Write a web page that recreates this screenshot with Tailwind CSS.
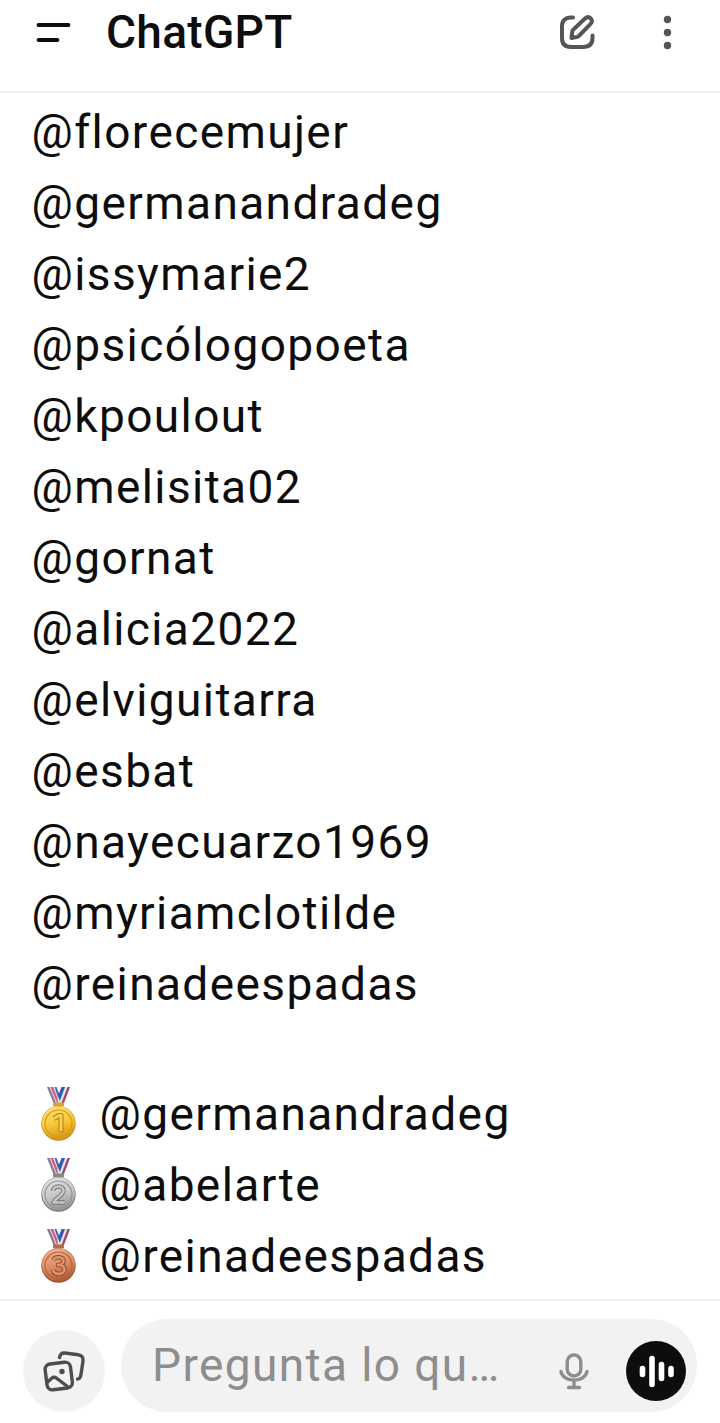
<!DOCTYPE html>
<html lang="es">
<head>
<meta charset="utf-8">
<title>ChatGPT</title>
<script src="https://cdn.jsdelivr.net/npm/@tailwindcss/browser@4"></script>
</head>
<body class="bg-white">
<div class="flex h-[1423px] w-[720px] flex-col overflow-hidden bg-white font-[Roboto,sans-serif] text-[46px] text-[#0d0d0d]">
  <header class="flex h-[93px] shrink-0 items-start border-b-2 border-[#f1f1f1] pl-[36px]">
    <svg class="mt-[20px] h-[26px] w-[36px] shrink-0" viewBox="0 0 36 26" fill="none" stroke="#0d0d0d" stroke-width="3.8" stroke-linecap="round"><path d="M2.500 5H32.500M2.500 20H21.500"/></svg>
    <h1 class="ml-[34px] w-[220px] text-[46px] leading-[64px] font-medium tracking-[0.3px]">ChatGPT</h1>
    <svg class="mt-[12px] ml-[227px] h-[42px] w-[42px] shrink-0" viewBox="0 0 42 42" fill="none" stroke="#555" stroke-width="4" stroke-linecap="round" stroke-linejoin="round"><path d="M20 5.500H18C12 5.500 9 9 9 14V26C9 32 12 35 18 35H30C36 35 39.500 32 39.500 26V23.500"/><path d="M18.500 26L19.300 19.500Q19.500 18.500 20.300 17.700L32 6.500C34 4.700 36.300 5 37.800 6.500C39.200 8 39.200 10.200 37.500 12L26.300 23.500Q25.500 24.500 24.300 24.900Z"/></svg>
    <svg class="mt-[12px] ml-[62px] h-[42px] w-[42px] shrink-0" viewBox="0 0 42 42" fill="#555"><circle cx="10.500" cy="7.500" r="3.700"/><circle cx="10.500" cy="20.500" r="3.700"/><circle cx="10.500" cy="33.500" r="3.700"/></svg>
  </header>

  <main class="flex h-[1206px] shrink-0 flex-col pt-[4px] pl-[31.5px] leading-[71px] tracking-[1.4px] whitespace-nowrap">
    <ul>
      <li>@florecemujer</li>
      <li>@germanandradeg</li>
      <li>@issymarie2</li>
      <li>@psicólogopoeta</li>
      <li>@kpoulout</li>
      <li>@melisita02</li>
      <li>@gornat</li>
      <li>@alicia2022</li>
      <li>@elviguitarra</li>
      <li>@esbat</li>
      <li>@nayecuarzo1969</li>
      <li>@myriamclotilde</li>
      <li>@reinadeespadas</li>
    </ul>
    <svg class="absolute h-0 w-0" aria-hidden="true">
      <defs>
        <linearGradient id="gold" x2="0.3" y2="1"><stop stop-color="#ffe983"/><stop offset=".6" stop-color="#f6c636"/><stop offset="1" stop-color="#dd981a"/></linearGradient>
        <linearGradient id="silver" x2="0.3" y2="1"><stop stop-color="#e6e6e6"/><stop offset=".6" stop-color="#c8c8c8"/><stop offset="1" stop-color="#999"/></linearGradient>
        <linearGradient id="bronze" x2="0.3" y2="1"><stop stop-color="#f3b896"/><stop offset=".6" stop-color="#dc8c64"/><stop offset="1" stop-color="#b4603c"/></linearGradient>
        <g id="ribbon">
          <path d="M6 0H14L22 16H12.500Z" fill="#dfe3f3"/><path d="M6 0H8.500L15 16H12.500Z" fill="#8b7898"/><path d="M9.500 0H12L18.500 16H16Z" fill="#d65d68"/><path d="M13.500 0H15.500L21 14L19 16Z" fill="#4568bc"/>
          <path d="M21 0H29L22 16H17L16.500 12Z" fill="#dfe3f3"/><path d="M20.500 0H24L18.800 14L17 9Z" fill="#3459b4"/><path d="M26.500 0H29L23 16H20.500Z" fill="#a9445f"/>
        </g>
      </defs>
    </svg>
    <ul class="mt-[59px]">
      <li class="flex">
        <svg class="mt-[8px] ml-[9.5px] h-[54px] w-[35px] shrink-0" viewBox="0 0 35 54"><use href="#ribbon"/><rect x="12" y="15.500" width="11" height="4" rx="1" fill="#dba32c"/><circle cx="17.500" cy="36.500" r="17.200" fill="#c48a1c"/><circle cx="17.500" cy="36" r="16.500" fill="url(#gold)"/><circle cx="17.500" cy="36.500" r="13.500" fill="none" stroke="#d89b1b" stroke-width="1.200"/><path d="M13 31.500L18 28.500H20V45" fill="none" stroke="#b57b12" stroke-width="5" stroke-linejoin="round"/><path d="M13 31.500L18 28.500H20V44.300" fill="none" stroke="#f8d254" stroke-width="3" stroke-linejoin="round"/></svg>
        <span class="ml-[23.5px]">@germanandradeg</span>
      </li>
      <li class="flex">
        <svg class="mt-[8px] ml-[9.5px] h-[54px] w-[35px] shrink-0" viewBox="0 0 35 54"><use href="#ribbon"/><rect x="12" y="15.500" width="11" height="4" rx="1" fill="#888"/><circle cx="17.500" cy="36.500" r="17.200" fill="#777"/><circle cx="17.500" cy="36" r="16.500" fill="url(#silver)"/><circle cx="17.500" cy="36.500" r="13.500" fill="none" stroke="#969696" stroke-width="1.200"/><path d="M12 33C12 27 23 27 22.500 33C22 37 15 40 12.500 44.500H23.500" fill="none" stroke="#747474" stroke-width="4.500" stroke-linejoin="round"/><path d="M12 33C12 27 23 27 22.500 33C22 37 15 40 12.500 44.500H23.500" fill="none" stroke="#c4c4c4" stroke-width="2.600" stroke-linejoin="round"/></svg>
        <span class="ml-[23.5px]">@abelarte</span>
      </li>
      <li class="flex">
        <svg class="mt-[8px] ml-[9.5px] h-[54px] w-[35px] shrink-0" viewBox="0 0 35 54"><use href="#ribbon"/><rect x="12" y="15.500" width="11" height="4" rx="1" fill="#b96a45"/><circle cx="17.500" cy="36.500" r="17.200" fill="#95502f"/><circle cx="17.500" cy="36" r="16.500" fill="url(#bronze)"/><circle cx="17.500" cy="36.500" r="13.500" fill="none" stroke="#b9643d" stroke-width="1.200"/><path d="M12.500 31C14 27 23 27.500 22.500 32C22.500 35 19 36 17 36C20 36 23.500 37 23.500 40.500C23.500 46 13.500 46.500 12 41" fill="none" stroke="#8f4b2e" stroke-width="4.500" stroke-linejoin="round"/><path d="M12.500 31C14 27 23 27.500 22.500 32C22.500 35 19 36 17 36C20 36 23.500 37 23.500 40.500C23.500 46 13.500 46.500 12 41" fill="none" stroke="#de946c" stroke-width="2.600" stroke-linejoin="round"/></svg>
        <span class="ml-[23.5px]">@reinadeespadas</span>
      </li>
    </ul>
  </main>

  <footer class="flex h-[124px] shrink-0 items-start border-t-2 border-[#f1f1f1] pl-[23px]">
    <button class="mt-[29px] flex h-[82px] w-[82px] shrink-0 items-center justify-center rounded-full bg-[#f2f2f2]">
      <svg class="h-[82px] w-[82px]" viewBox="0 0 82 82" fill="none" stroke="#4d4d4d" stroke-width="3.400" stroke-linecap="round" stroke-linejoin="round"><rect x="23" y="33" width="25.500" height="26" rx="5.500" transform="rotate(-7 35.700 46)"/><path d="M24.500 52L29 48Q31 46.500 33.300 48L44.500 56.500"/><circle cx="39" cy="41.500" r="2.700" fill="#4d4d4d" stroke="none"/><path d="M36.500 27.500C37.300 24 39 22.500 42 23L55 24.700C59 25.200 60.500 27.500 60 31L58 44.500C57.500 47.500 56.500 49 54.500 49"/></svg>
    </button>
    <div class="mt-[18px] ml-[16px] flex h-[93px] w-[576px] items-start rounded-[46.5px] bg-[#f2f2f2] pl-[31px]">
      <span class="mt-px w-[400px] leading-[90px] tracking-[1.4px] whitespace-nowrap text-[#8d8d8d]">Pregunta lo qu…</span>
      <svg class="mt-[32px] ml-[6px] h-[40px] w-[32px] shrink-0" viewBox="0 0 32 40" fill="none" stroke="#8d8d8d" stroke-width="3.400" stroke-linecap="round"><rect x="9.200" y="4" width="13.600" height="21" rx="6.800"/><path d="M3 20.500C5 32 27 32 29 20.500M16 29.500V36M10.500 36.500H21.500"/></svg>
      <div class="mt-[22px] ml-[36px] h-[60px] w-[60px] shrink-0 rounded-full bg-[#0d0d0d]">
        <svg class="h-[60px] w-[60px]" viewBox="0 0 60 60" fill="none" stroke="#fff" stroke-width="5.600" stroke-linecap="round"><path d="M16.500 27.500V33.500M26 17.500V43.500M35.500 23.500V37.500M45 27.500V33.500"/></svg>
      </div>
    </div>
  </footer>
</div>
</body>
</html>
